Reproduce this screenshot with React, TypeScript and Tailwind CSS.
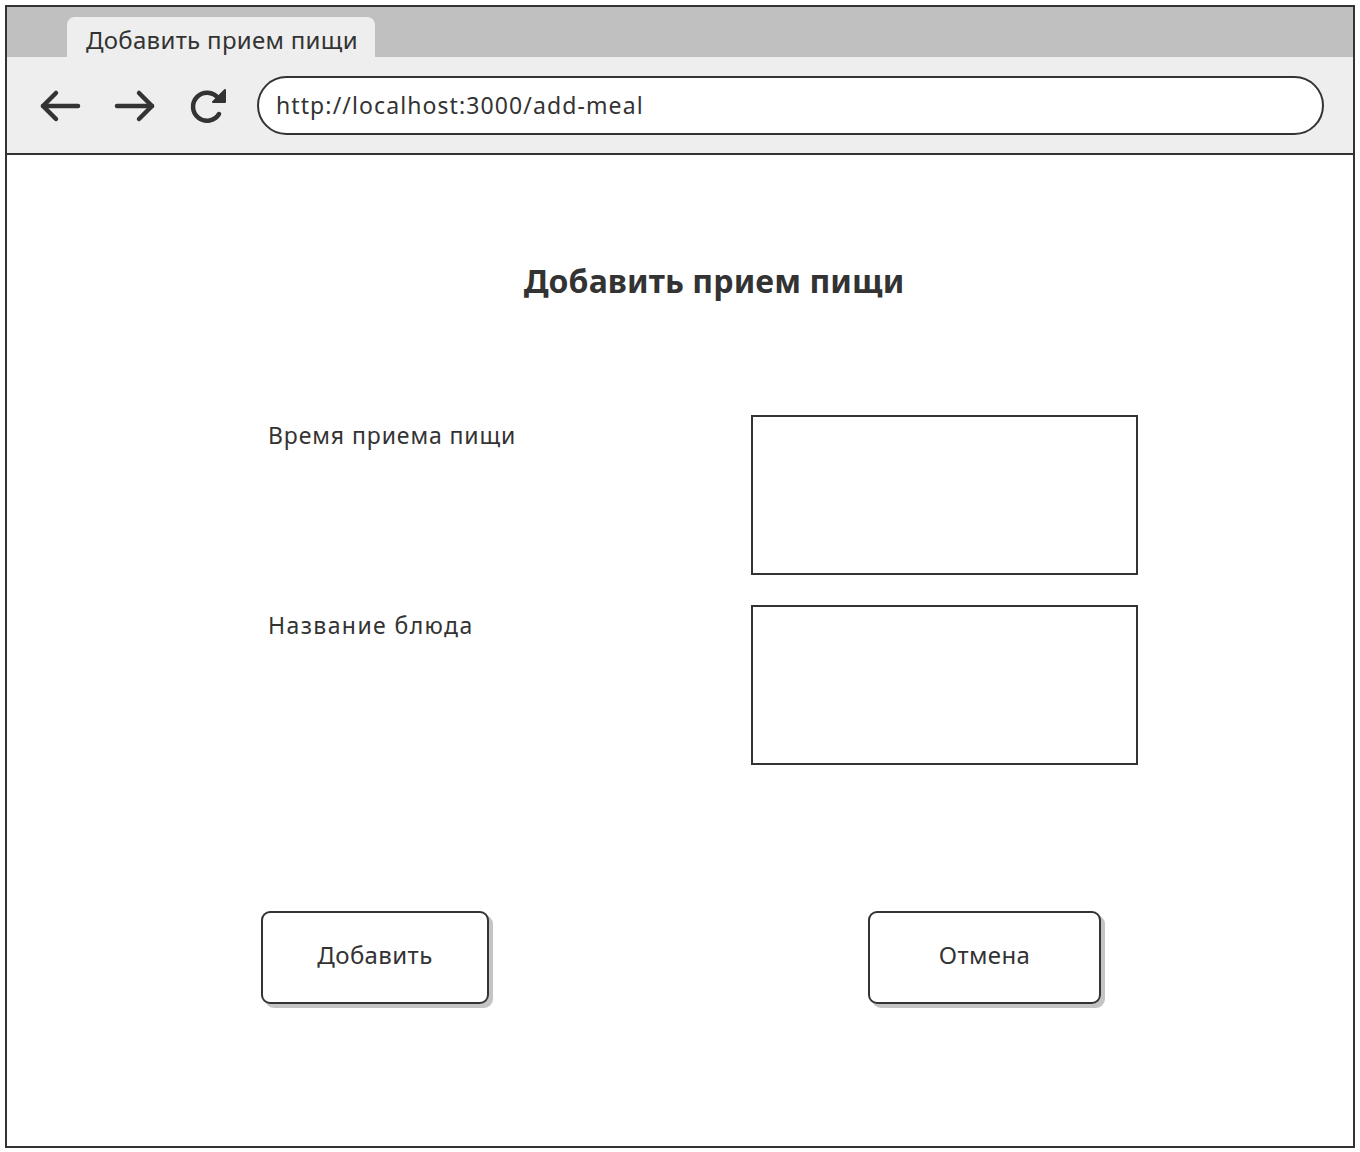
import React from "react";

const font = { fontFamily: '"Noto Sans", "Open Sans", sans-serif' };

function BackArrow() {
  return (
    <svg width="44" height="36" viewBox="0 0 44 36" fill="none" stroke="#333" strokeWidth="4.5" strokeLinecap="round" strokeLinejoin="round">
      <path d="M40 18H5" />
      <path d="M18 5L5 18L18 31" />
    </svg>
  );
}

function FwdArrow() {
  return (
    <svg width="44" height="36" viewBox="0 0 44 36" fill="none" stroke="#333" strokeWidth="4.5" strokeLinecap="round" strokeLinejoin="round">
      <path d="M4 18H39" />
      <path d="M26 5L39 18L26 31" />
    </svg>
  );
}

function Reload() {
  return (
    <svg width="40" height="38" viewBox="0 0 40 38" fill="none">
      <path d="M31 27A14 14 0 1 1 30 11" stroke="#333" strokeWidth="4.5" strokeLinecap="round" />
      <path d="M37 3L37 15L25 15Z" fill="#333" stroke="#333" strokeWidth="2" strokeLinejoin="round" />
    </svg>
  );
}

export default function App() {
  return (
    <div className="w-[1360px] h-[1152px] bg-white overflow-hidden text-[#333]" style={font}>
      <div className="ml-[5px] mt-[5px] w-[1350px] h-[1143px] border-2 border-[#333] flex flex-col">
        {/* tab bar */}
        <div className="h-[50px] bg-[#c0c0c0] flex items-end pl-[60px]">
          <div className="w-[308px] h-[40px] bg-[#eeeeee] rounded-t-[8px] flex items-center pl-[19px] pt-[6px] text-[24px] tracking-[0.3px]">
            Добавить прием пищи
          </div>
        </div>
        {/* toolbar */}
        <div className="h-[98px] bg-[#eeeeee] border-b-2 border-[#333] flex items-center pl-[31px] pr-[29px] gap-0">
          <div className="flex items-center gap-[31px] mr-[29px] mt-[1px]">
            <BackArrow />
            <FwdArrow />
            <Reload />
          </div>
          <div className="flex-1 h-[59px] bg-white border-2 border-[#333] rounded-full flex items-center pl-[17px] text-[23px] tracking-[1.1px]">
            http://localhost:3000/add-meal
          </div>
        </div>
        {/* content */}
        <div className="flex-1 flex flex-col">
          <div className="pt-[106px] h-[146px] text-center pl-[68px] text-[32px] font-bold leading-[40px] tracking-[0.1px]">
            Добавить прием пищи
          </div>
          <div className="pt-[114px] pl-[261px] flex flex-col gap-[30px]">
            <div className="flex">
              <div className="w-[483px] pt-[6px] text-[23px] leading-[28px] tracking-[0.9px]">Время приема пищи</div>
              <div className="w-[387px] h-[160px] border-2 border-[#333]" />
            </div>
            <div className="flex">
              <div className="w-[483px] pt-[6px] text-[23px] leading-[28px] tracking-[1.4px]">Название блюда</div>
              <div className="w-[387px] h-[160px] border-2 border-[#333]" />
            </div>
          </div>
          <div className="pt-[146px] pl-[254px] flex">
            <div className="w-[228px] h-[93px] border-2 border-[#333] rounded-[9px] shadow-[4px_4px_0_#c4c4c4] flex items-center justify-center pb-[5px] text-[24px] tracking-[0.4px]">
              Добавить
            </div>
            <div className="ml-[379px] w-[233px] h-[93px] border-2 border-[#333] rounded-[9px] shadow-[4px_4px_0_#c4c4c4] flex items-center justify-center pb-[5px] text-[24px] tracking-[0.4px]">
              Отмена
            </div>
          </div>
        </div>
      </div>
    </div>
  );
}
